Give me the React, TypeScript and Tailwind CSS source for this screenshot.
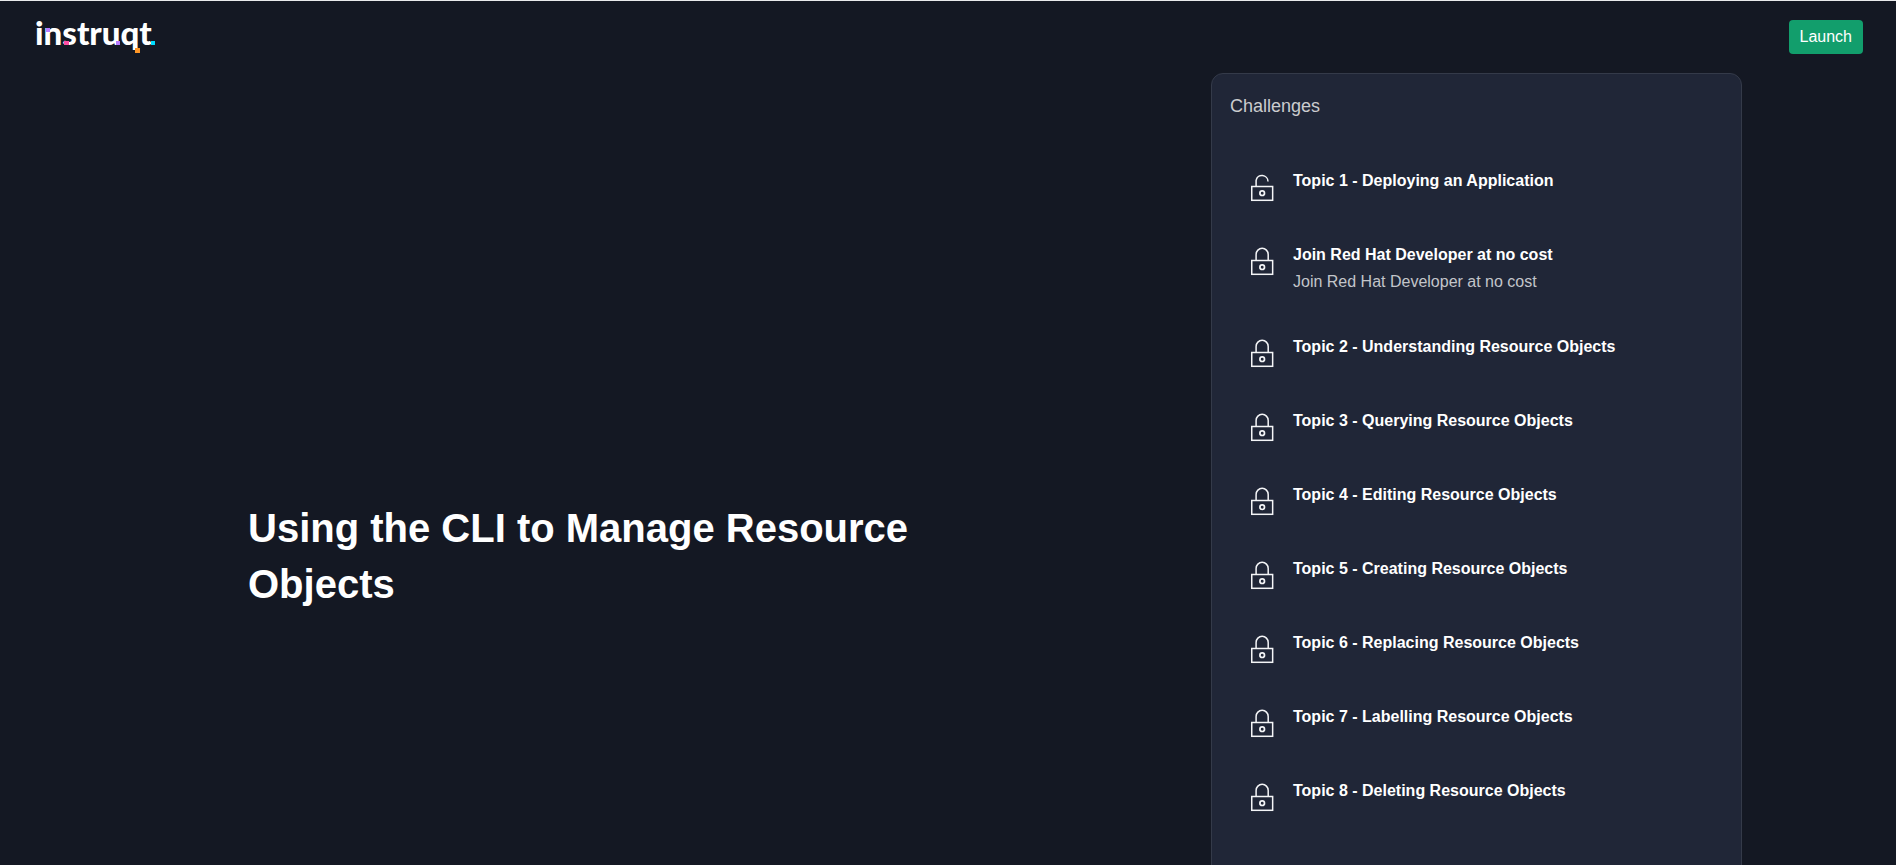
type Challenge = { title: string; teaser?: string; unlocked?: boolean };

const challenges: Challenge[] = [
  { title: "Topic 1 - Deploying an Application", unlocked: true },
  { title: "Join Red Hat Developer at no cost", teaser: "Join Red Hat Developer at no cost" },
  { title: "Topic 2 - Understanding Resource Objects" },
  { title: "Topic 3 - Querying Resource Objects" },
  { title: "Topic 4 - Editing Resource Objects" },
  { title: "Topic 5 - Creating Resource Objects" },
  { title: "Topic 6 - Replacing Resource Objects" },
  { title: "Topic 7 - Labelling Resource Objects" },
  { title: "Topic 8 - Deleting Resource Objects" },
];

function Logo() {
  return (
    <svg width="128" height="50" viewBox="0 0 128 50" role="img" aria-label="instruqt">
      <text x="3" y="33" fill="#fff" fontFamily="Lato, sans-serif" fontWeight="900" fontSize="33">
        instruqt
      </text>
      <rect x="14" y="16" width="4" height="4" fill="#b87bff" />
      <rect x="32" y="29" width="5" height="4" fill="#ff4fa3" />
      <rect x="84" y="29" width="4" height="4" fill="#b87bff" />
      <rect x="103" y="36" width="5" height="5" fill="#ff9626" />
      <rect x="119" y="29" width="4" height="4" fill="#00dcff" />
    </svg>
  );
}

function LockIcon({ unlocked = false }: { unlocked?: boolean }) {
  return (
    <svg
      className="h-[34px] w-[34px] shrink-0"
      viewBox="0 0 34 34"
      fill="none"
      stroke="#f4f5f7"
      strokeWidth="1.5"
      aria-hidden="true"
    >
      <rect x="6.75" y="16.5" width="20.9" height="13.8" />
      <path d={unlocked ? "M11.1 16.5V10.4A6 6 0 0 1 23 11.4" : "M11.1 16.5V10.4A6.05 6.05 0 0 1 23.2 10.4V16.5"} />
      <circle cx="17.2" cy="23.2" r="2.3" strokeWidth="1.7" />
    </svg>
  );
}

export default function App() {
  return (
    <div className="flex h-screen flex-col overflow-hidden border-t border-[#e9eaec] bg-[#141823] font-['Liberation_Sans',sans-serif] text-white">
      <header className="flex h-[72px] shrink-0 items-center justify-between pr-[33px] pl-8">
        <a href="#home">
          <Logo />
        </a>
        <button type="button" className="h-[34px] rounded bg-[#129e6c] px-[11px] text-base">
          Launch
        </button>
      </header>
      <main className="flex min-h-0 flex-1 items-start justify-between pr-[154px] pl-[248px]">
        <h1 className="w-[48%] pt-[427px] text-[40px] leading-[56px] font-semibold">
          Using the CLI to Manage Resource Objects
        </h1>
        <section className="w-[531px] rounded-t-xl border border-[#343a49] bg-[#202637] px-[18px] pt-4 pb-40">
          <h2 className="text-lg leading-8 text-[#cbccce]">Challenges</h2>
          <ul className="mt-7">
            {challenges.map((c) => (
              <li key={c.title} className="flex gap-[14px] py-5 pl-[15px]">
                <LockIcon unlocked={c.unlocked} />
                <div>
                  <h3 className="text-base leading-[22px] font-semibold">{c.title}</h3>
                  {c.teaser && <p className="mt-1 mb-0.5 text-base leading-6 text-[#c3c5ca]">{c.teaser}</p>}
                </div>
              </li>
            ))}
          </ul>
        </section>
      </main>
    </div>
  );
}
